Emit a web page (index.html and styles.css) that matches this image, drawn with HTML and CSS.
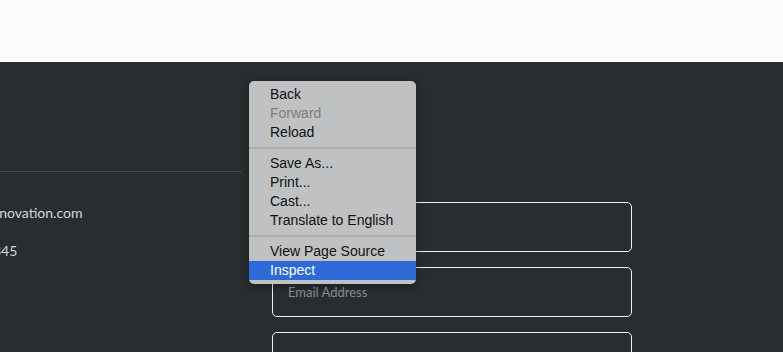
FILE: index.html
```html
<!DOCTYPE html>
<html lang="en">
<head>
    <meta charset="UTF-8">
    <meta name="viewport" content="width=device-width, initial-scale=1.0">
    <title>Contact</title>
    <link rel="stylesheet" href="styles.css">
</head>
<body>

    <header class="topbar"></header>

    <section class="contact">
        <div class="contact-info">
            <div class="info-head"></div>
            <p class="info-line info-email">info@greeninnovation.com</p>
            <p class="info-line info-phone">+1 (555) 678-2345</p>
        </div>

        <form class="contact-form">
            <input type="text" name="name" placeholder="Your Name">
            <input type="email" name="email" placeholder="Email Address">
            <input type="text" name="subject" placeholder="Subject">
        </form>
    </section>

    <!-- right-click menu -->
    <ul class="context-menu">
        <li>Back</li>
        <li class="disabled">Forward</li>
        <li>Reload</li>
        <li class="separator"></li>
        <li>Save As...</li>
        <li>Print...</li>
        <li>Cast...</li>
        <li>Translate to English</li>
        <li class="separator"></li>
        <li>View Page Source</li>
        <li class="active">Inspect</li>
    </ul>

</body>
</html>
```

FILE: styles.css
```css
/* Basic Reset */
* {
    margin: 0;
    padding: 0;
    box-sizing: border-box;
}

html,
body {
    height: 352px;
    overflow: hidden;
}

body {
    font-family: 'Lato', sans-serif;
    background-color: #292d30;
}

.topbar {
    height: 62px;
    background-color: #f9fbfd;
}

.contact {
    display: flex;
    gap: 30px;
}

.contact-info {
    width: 242px;
    flex-shrink: 0;
}

.info-head {
    height: 110px;
    border-bottom: 1px solid #43474a;
}

.info-line {
    color: #d4d6d8;
    font-size: 14px;
    line-height: 20px;
    white-space: nowrap;
}

.info-email {
    margin-top: 31px;
    margin-left: -82px;
}

.info-phone {
    margin-top: 18px;
    margin-left: -100px;
}

.contact-form {
    width: 360px;
    padding-top: 140px;
    display: flex;
    flex-direction: column;
    gap: 15px;
}

.contact-form input {
    height: 50px;
    width: 100%;
    padding: 0 15px;
    border: 1px solid #f2f2f2;
    border-radius: 5px;
    background: transparent;
    color: #fff;
    font-family: 'Lato', sans-serif;
    font-size: 13px;
}

.contact-form input::placeholder {
    color: #8b8e91;
}

.context-menu {
    position: absolute;
    left: 249px;
    top: 81px;
    width: 167px;
    padding: 4px 0;
    list-style: none;
    background-color: #bfc1c2;
    border-radius: 5px;
    box-shadow: 0 2px 8px rgba(0, 0, 0, 0.35);
    font-family: 'Liberation Sans', Arial, sans-serif;
    font-size: 14px;
    color: #111;
}

.context-menu li {
    height: 19px;
    line-height: 19px;
    padding-left: 21px;
}

.context-menu .disabled {
    color: #7d7f81;
}

.context-menu .active {
    background-color: #2d6ad8;
    color: #fff;
}

.context-menu .separator {
    height: 12px;
    padding: 0;
    position: relative;
}

.context-menu .separator::after {
    content: '';
    position: absolute;
    left: 0;
    right: 0;
    top: 5px;
    height: 2px;
    background-color: #abadae;
}
```
